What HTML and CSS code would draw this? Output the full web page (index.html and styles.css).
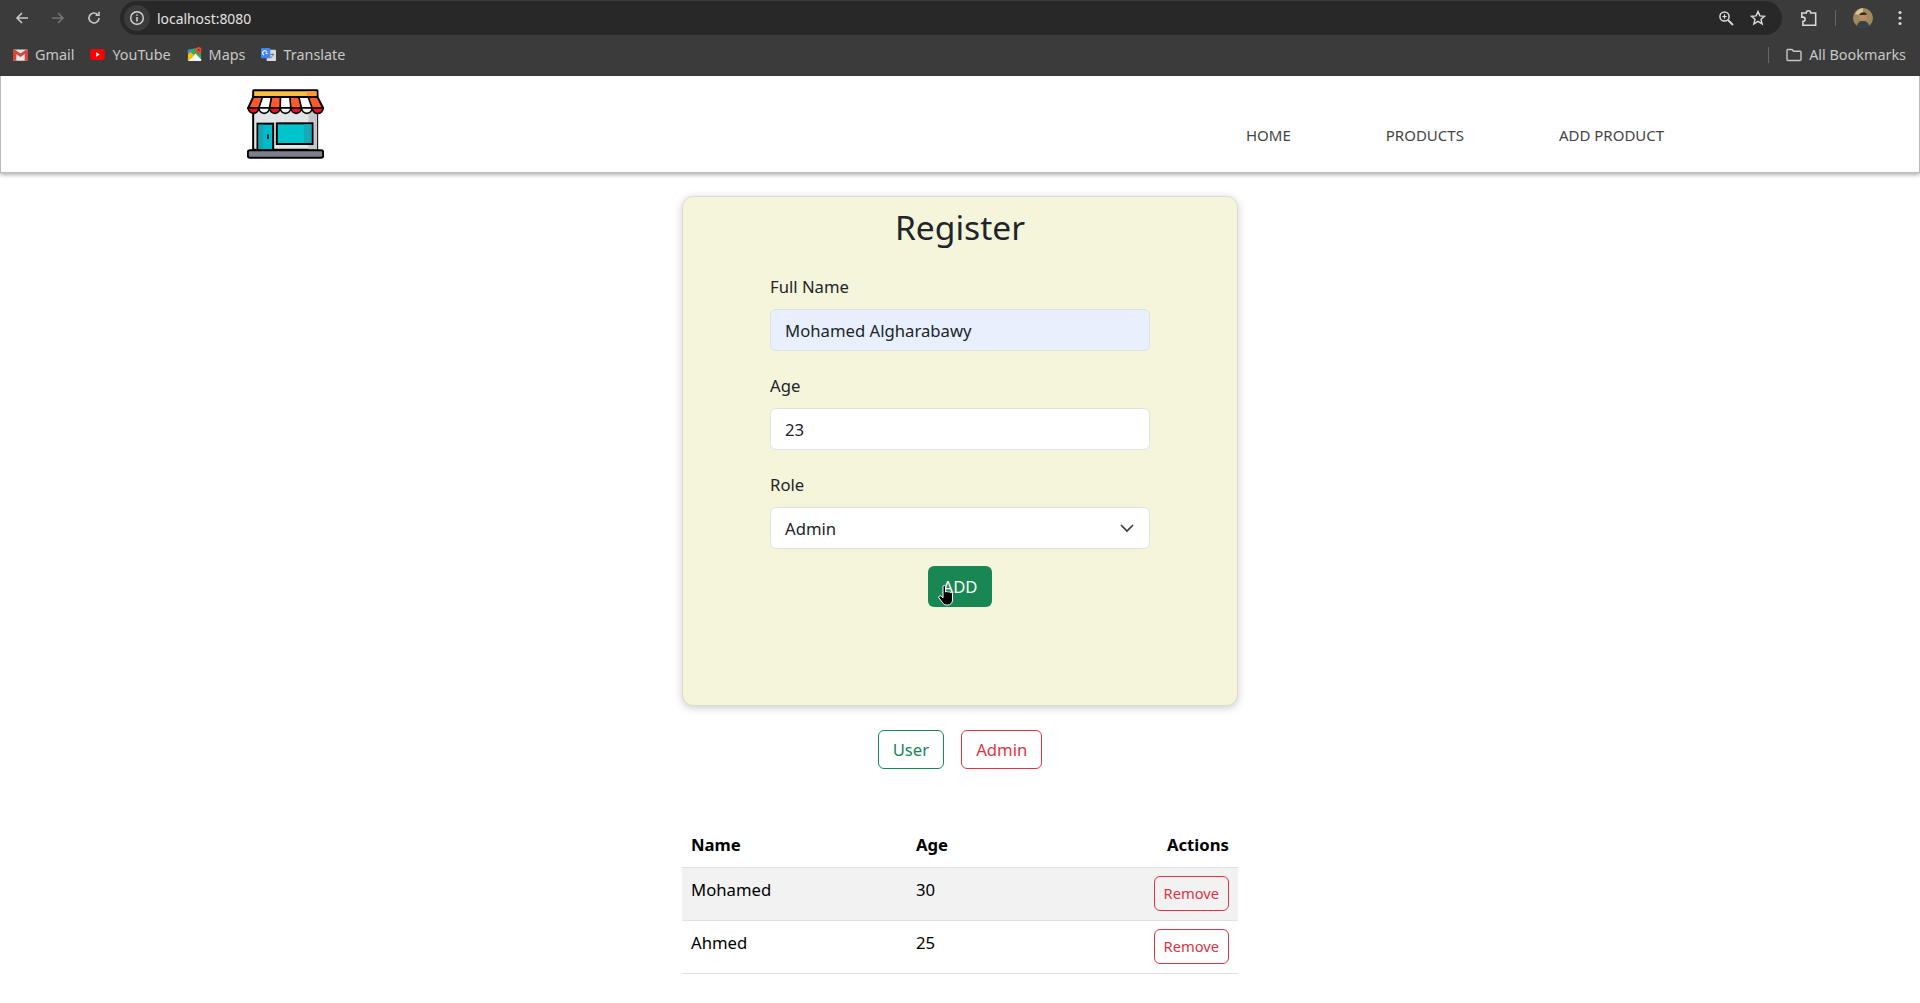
FILE: index.html
```html
<!DOCTYPE html>
<html lang="en">
<head>
<meta charset="UTF-8"/>
<title>Register</title>
<link rel="stylesheet" href="styles.css">
</head>
<body>
<!-- browser toolbar -->
<div class="toolbar">
  <div class="nav-icons">
    <svg class="tool-icon" viewBox="0 0 16 16"><path d="M14 8H3M8 3L3 8l5 5" fill="none" stroke="#c7c7c7" stroke-width="1.6"/></svg>
    <svg class="tool-icon" viewBox="0 0 16 16"><path d="M2 8h11M8 3l5 5-5 5" fill="none" stroke="#757575" stroke-width="1.6"/></svg>
    <svg class="tool-icon" viewBox="0 0 16 16"><path d="M13 8a5 5 0 1 1-1.500-3.600M13 1.800v3.400H9.600" fill="none" stroke="#c7c7c7" stroke-width="1.6"/></svg>
  </div>
  <div class="omnibox">
    <div class="info-chip">
      <svg viewBox="0 0 16 16" width="16" height="16"><circle cx="8" cy="8" r="6.300" fill="none" stroke="#d8d8d8" stroke-width="1.4"/><path d="M8 7v4.500M8 4.400v1.400" stroke="#d8d8d8" stroke-width="1.5"/></svg>
    </div>
    <span class="url">localhost:8080</span>
    <div class="omni-right">
      <svg viewBox="0 0 16 16" width="16" height="16"><circle cx="6.500" cy="6.500" r="4.600" fill="none" stroke="#d8d8d8" stroke-width="1.5"/><path d="M10 10l5 5" stroke="#d8d8d8" stroke-width="1.8"/><path d="M4.300 6.500h4.400M6.500 4.300v4.400" stroke="#d8d8d8" stroke-width="1.2"/></svg>
      <svg viewBox="0 0 16 16" width="16" height="16"><path d="M8 1.600l1.900 4.300 4.600.4-3.500 3 1.100 4.600L8 11.400l-4.100 2.500L5 9.300l-3.500-3 4.600-.4z" fill="none" stroke="#d8d8d8" stroke-width="1.5"/></svg>
    </div>
  </div>
  <div class="tool-right">
    <svg viewBox="0 0 18 18" width="20" height="20"><path d="M2.500 4.500h4a2 2 0 0 1 4 0h4.500V15.500H3.500v-3.300a2 2 0 0 0 0-4h-1z" fill="none" stroke="#d8d8d8" stroke-width="1.4"/></svg>
    <span class="tool-sep"></span>
    <svg class="avatar" viewBox="0 0 20 20" width="20" height="20"><circle cx="10" cy="10" r="10" fill="#a08a5c"/><path d="M2 6a10 10 0 0 1 8-6v8z" fill="#d8c590"/><circle cx="10" cy="9" r="3.800" fill="#b98d6a"/><path d="M4 19c0-5 3-6 6-6s6 1 6 6a10 10 0 0 1-12 0z" fill="#39424a"/><path d="M6 7c1-3 6-4 8-1l-1 1H7z" fill="#3a2e25"/></svg>
    <svg class="kebab" viewBox="0 0 4 16" width="4" height="16"><circle cx="2" cy="2.500" r="1.600" fill="#d8d8d8"/><circle cx="2" cy="8" r="1.600" fill="#d8d8d8"/><circle cx="2" cy="13.500" r="1.600" fill="#d8d8d8"/></svg>
  </div>
</div>
<!-- bookmarks -->
<div class="bookmarks">
  <a class="bm">
    <svg viewBox="0 0 16 12" width="15" height="12"><rect width="16" height="12" rx="1.500" fill="#e8e8e8"/><path d="M0 1.500v9A1.500 1.500 0 0 0 1.500 12H3.500V4.800L8 8l4.500-3.200V12h2a1.500 1.500 0 0 0 1.500-1.500v-9C16 .3 14.700-.4 13.700.3L8 4.500 2.300.3C1.300-.4 0 .3 0 1.500z" fill="#d5453b"/></svg>
    Gmail</a>
  <a class="bm">
    <svg viewBox="0 0 16 12" width="15" height="11"><rect width="16" height="12" rx="3" fill="#f00"/><path d="M6.500 3.500v5L10.500 6z" fill="#fff"/></svg>
    YouTube</a>
  <a class="bm">
    <svg viewBox="0 0 16 16" width="15" height="15"><path d="M1 3l9-2 5 0v13l-14 1z" fill="#34a853"/><path d="M1 15L9 7l6 6v2z" fill="#f5f5f5"/><path d="M1 3l7 6-7 6z" fill="#fbbc04"/><path d="M1 3h5L1 8z" fill="#4285f4"/><path d="M12.500 0a3 3 0 0 1 3 3c0 2-3 5-3 5s-3-3-3-5a3 3 0 0 1 3-3z" fill="#ea4335"/><circle cx="12.500" cy="3" r="1" fill="#8a1c14"/></svg>
    Maps</a>
  <a class="bm">
    <svg viewBox="0 0 16 16" width="15" height="15"><rect x="6" y="3" width="10" height="12" rx="1" fill="#d9d9d9"/><rect x="0" y="1" width="10" height="11" rx="1" fill="#4285f4"/><path d="M3.200 8.500a2.300 2.300 0 1 1 2.900-3M5 6.800h2" fill="none" stroke="#fff" stroke-width="1.200"/><path d="M10 8h4M12 7v1M13 8c-.4 2-2 3-3 3.500" fill="none" stroke="#666" stroke-width=".9"/></svg>
    Translate</a>
  <div class="bm-right">
    <span class="bm-sep"></span>
    <a class="bm">
      <svg viewBox="0 0 16 14" width="16" height="14"><path d="M1 2.500A1 1 0 0 1 2 1.500h4l1.500 1.800H14a1 1 0 0 1 1 1v7.200a1 1 0 0 1-1 1H2a1 1 0 0 1-1-1z" fill="none" stroke="#c7c7c7" stroke-width="1.400"/></svg>
      All Bookmarks</a>
  </div>
</div>

<!-- site navbar -->
<nav class="navbar">
  <a class="logo">
    <svg viewBox="52 28 230 210" width="77" height="70">
      <path d="M70 50h192v160H70z" fill="#e3e4e6" stroke="#000" stroke-width="6"/>
      <path d="M236 60h26v150h-26z" fill="#c6c7cc"/>
      <rect x="70" y="32" width="193" height="20" rx="2" fill="#ffbd42" stroke="#000" stroke-width="6"/>
      <rect x="231" y="35" width="29" height="14" fill="#ff9a2e"/>
      <path d="M70 52h28l-11 33H55z" fill="#ff5a2a"/>
      <path d="M98 52h27l-6 33H87z" fill="#fff"/>
      <path d="M125 52h27l-1 33h-32z" fill="#ff5a2a"/>
      <path d="M152 52h28l3 33h-32z" fill="#fff"/>
      <path d="M180 52h27l8 33h-32z" fill="#ff5a2a"/>
      <path d="M207 52h28l12 33h-32z" fill="#fff"/>
      <path d="M235 52h28l17 33h-33z" fill="#ff5a2a"/>
      <path d="M70 52h193l17 33H55z" fill="none" stroke="#000" stroke-width="6"/>
      <path d="M98 52L87 85M125 52l-6 33M152 52l-1 33M180 52l3 33M207 52l8 33M235 52l12 33" stroke="#000" stroke-width="5"/>
      <path d="M55 85h32a16 16 0 0 1-32 0z" fill="#e8102a" stroke="#000" stroke-width="5"/>
      <path d="M87 85h32a16 16 0 0 1-32 0z" fill="#f4f4f4" stroke="#000" stroke-width="5"/>
      <path d="M119 85h32a16 16 0 0 1-32 0z" fill="#e8102a" stroke="#000" stroke-width="5"/>
      <path d="M151 85h32a16 16 0 0 1-32 0z" fill="#f4f4f4" stroke="#000" stroke-width="5"/>
      <path d="M183 85h32a16 16 0 0 1-32 0z" fill="#e8102a" stroke="#000" stroke-width="5"/>
      <path d="M215 85h32a16 16 0 0 1-32 0z" fill="#f4f4f4" stroke="#000" stroke-width="5"/>
      <path d="M247 85h33a16 16 0 0 1-33 0z" fill="#e8102a" stroke="#000" stroke-width="5"/>
      <rect x="83" y="132" width="47" height="80" fill="#00bcc9" stroke="#000" stroke-width="6"/>
      <rect x="86" y="135" width="14" height="74" fill="#1aa3b3"/>
      <rect x="112" y="164" width="5" height="14" rx="2.500" fill="#000"/>
      <rect x="141" y="131" width="107" height="62" fill="#00c4cc" stroke="#000" stroke-width="6"/>
      <rect x="222" y="134" width="23" height="56" fill="#1aa8b8"/>
      <rect x="54" y="212" width="226" height="22" rx="6" fill="#7e7f8c" stroke="#000" stroke-width="6"/>
    </svg>
  </a>
  <div class="nav-links">
    <a>HOME</a>
    <a>PRODUCTS</a>
    <a>ADD PRODUCT</a>
  </div>
</nav>

<main class="content">
  <div class="card">
    <h2>Register</h2>
    <form class="reg-form">
      <div class="field">
        <label>Full Name</label>
        <div class="input autofilled">Mohamed Algharabawy</div>
      </div>
      <div class="field">
        <label>Age</label>
        <div class="input">23</div>
      </div>
      <div class="field">
        <label>Role</label>
        <div class="input select">Admin
          <svg viewBox="0 0 16 16" width="16" height="16"><path d="M2 5l6 6 6-6" fill="none" stroke="#343a40" stroke-width="1.700"/></svg>
        </div>
      </div>
      <div class="add-wrap">
        <span class="btn btn-success">ADD
          <!-- mouse pointer in the shot -->
          <svg class="cursor" viewBox="0 0 20 22" width="20" height="22"><path d="M6 2c1-1 2.500-1 2.500 1v5c1-.8 2-.5 2.500.2.800-.6 2-.4 2.400.4 1-.4 2.100.2 2.100 1.400V16c0 3-2 5-5 5H9.500c-2 0-3-1-4-2.500L2 14c-1-1.500.8-3 2.200-1.800L6 14z" fill="#000" stroke="#fff" stroke-width="1"/></svg>
        </span>
      </div>
    </form>
  </div>

  <div class="filters">
    <span class="btn btn-outline-success">User</span>
    <span class="btn btn-outline-danger">Admin</span>
  </div>

  <table class="users">
    <thead>
      <tr><th>Name</th><th>Age</th><th class="right">Actions</th></tr>
    </thead>
    <tbody>
      <tr class="striped"><td>Mohamed</td><td>30</td><td class="right"><span class="btn btn-sm btn-outline-danger">Remove</span></td></tr>
      <tr><td>Ahmed</td><td>25</td><td class="right"><span class="btn btn-sm btn-outline-danger">Remove</span></td></tr>
    </tbody>
  </table>
</main>
</body>
</html>
```

FILE: styles.css
```css
*{
box-sizing: border-box;
}
body{
margin: 0;
font-family: "Noto Sans", sans-serif;
font-size: 16.7px;
color: #212529;
background-color: #fff;
height: 1003px;
overflow: hidden;
}

/* browser chrome */
.toolbar{
display: flex;
align-items: center;
height: 35px;
background-color: #3b3b3b;
}
.nav-icons{
display: flex;
gap: 20px;
width: 120px;
padding-left: 14px;
}
.tool-icon{
width: 16px;
height: 16px;
}
.omnibox{
display: flex;
align-items: center;
width: 1662px;
height: 34px;
margin-top: 1px;
background-color: #282828;
border-radius: 17px;
}
.info-chip{
display: flex;
align-items: center;
justify-content: center;
width: 26px;
height: 26px;
margin-left: 4px;
border-radius: 50%;
background-color: #3b3b3b;
}
.url{
margin-left: 7px;
font-size: 13.9px;
color: #e3e3e3;
}
.omni-right{
display: flex;
gap: 16px;
margin-left: auto;
padding-right: 16px;
}
.tool-right{
display: flex;
align-items: center;
flex: 1;
padding-left: 17px;
}
.tool-sep{
width: 1px;
height: 16px;
margin: 0 17px 0 16px;
background-color: #666;
}
.avatar{
margin-left: 0;
}
.kebab{
margin-left: 25px;
}
.bookmarks{
display: flex;
align-items: center;
gap: 16px;
height: 41px;
padding: 0 14px 2px 13px;
background-color: #3b3b3b;
font-size: 14.4px;
color: #c7c7c7;
}
.bm{
display: flex;
align-items: center;
gap: 7px;
}
.bm-right{
display: flex;
align-items: center;
margin-left: auto;
}
.bm-sep{
width: 1px;
height: 16px;
margin-right: 17px;
background-color: #666;
}

/* site header */
.navbar{
display: flex;
height: 97px;
padding: 13px 0 0 246px;
border: 1px solid #bbb;
border-top: none;
background-color: #fff;
box-shadow: 0 2px 4px rgba(0,0,0,0.3);
}
.logo{
width: 78px;
}
.nav-links{
display: flex;
gap: 95px;
margin-left: 921px;
padding-top: 36px;
font-size: 15px;
color: #444;
}

/* page */
.content{
width: 556px;
margin: 23px auto 0;
}
.card{
height: 510px;
padding-top: 10px;
background-color: beige;
border: 1px solid #dcdcd0;
border-radius: 11px;
box-shadow: 0 2px 8px rgba(0,0,0,0.2);
}
.card h2{
margin: 0;
font-size: 33.6px;
font-weight: 400;
line-height: 1.2;
text-align: center;
}
.reg-form{
width: 380px;
margin: 26px auto 0;
}
.field{
margin-bottom: 21px;
}
.field:nth-child(3){
margin-bottom: 17px;
}
.field label{
display: block;
margin-bottom: 9px;
line-height: 27px;
}
.input{
display: flex;
align-items: center;
justify-content: space-between;
height: 42px;
padding: 0 14px;
background-color: #fff;
border: 1px solid #dee2e6;
border-radius: 6px;
}
.autofilled{
background-color: #e8f0fe;
}
.add-wrap{
text-align: center;
}
.btn{
position: relative;
display: inline-block;
padding: 6px 13px;
line-height: 27px;
border: 1px solid transparent;
border-radius: 6px;
}
.btn-success{
background-color: #198754;
color: #fff;
}
.cursor{
position: absolute;
left: 8px;
top: 17px;
}
.filters{
display: flex;
justify-content: center;
gap: 17px;
margin-top: 24px;
}
.filters .btn{
padding: 6px 14px;
line-height: 25px;
}
.btn-outline-success{
border-color: #198754;
color: #198754;
}
.btn-outline-danger{
border-color: #dc3545;
color: #dc3545;
}
.users .btn-sm{
padding: 4px 9px;
font-size: 14.7px;
line-height: 25px;
}
.users{
width: 100%;
margin-top: 55px;
border-collapse: collapse;
}
.users th{
padding: 9px 9px 10px;
line-height: 24px;
text-align: left;
font-weight: 700;
color: #000;
border-bottom: 1px solid #dee2e6;
}
.users td{
height: 53px;
padding: 8px 9px;
line-height: 27px;
vertical-align: top;
color: #000;
border-bottom: 1px solid #dee2e6;
}
.users th:nth-child(1){
width: 225px;
}
.users .right{
text-align: right;
}
.users td.right{
padding-top: 8px;
}
.striped td{
background-color: #f2f2f2;
}
```
